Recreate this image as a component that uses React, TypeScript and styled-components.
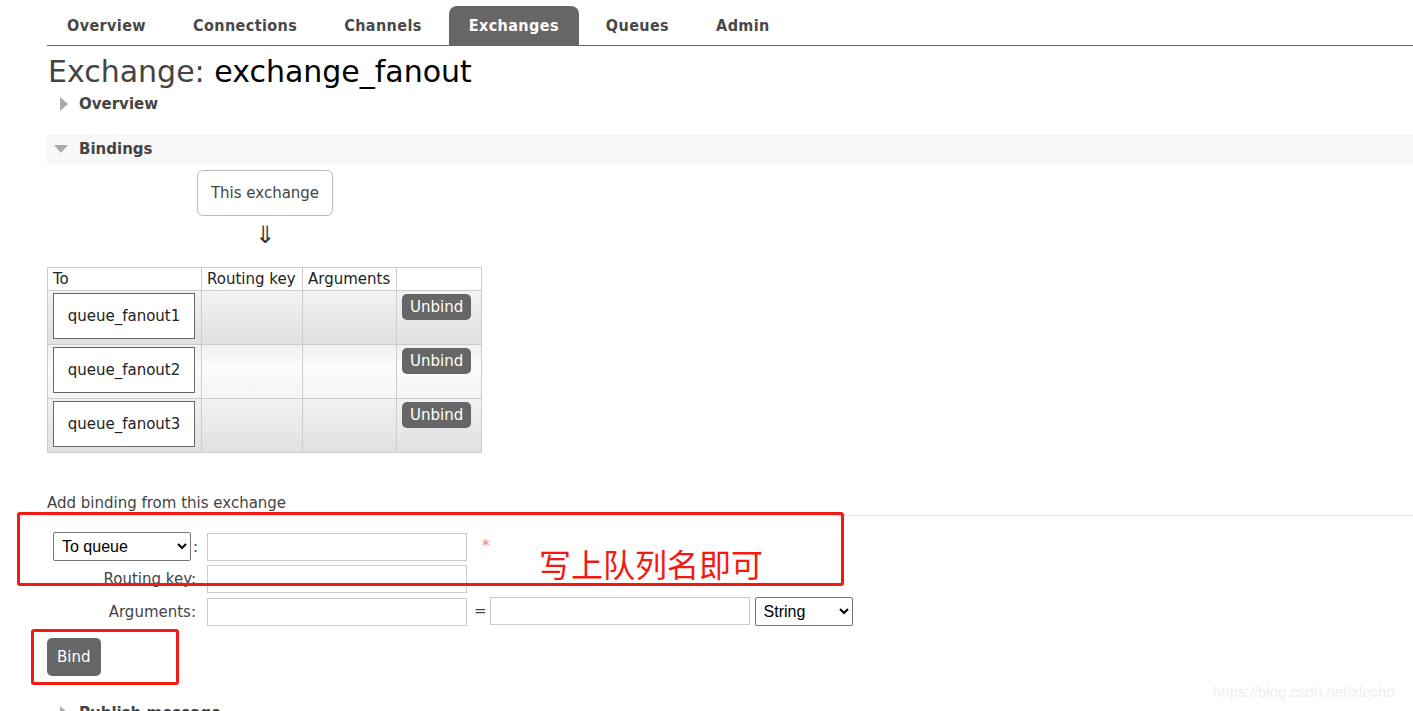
import styled, { createGlobalStyle } from 'styled-components';

const GlobalStyle = createGlobalStyle`
	body {
		margin: 0;
		background: #fff;
		font-family: 'DejaVu Sans', Verdana, sans-serif;
		color: #444;
	}
`;

const Page = styled.div`
	position: relative;
	width: 1413px;
	height: 711px;
	overflow: hidden;
`;

const Content = styled.div`
	padding-left: 47px;
`;

const Nav = styled.ul`
	display: flex;
	list-style: none;
	margin: 0;
	padding: 6px 0 0;
	height: 39px;
	border-bottom: 1px solid #666;
`;

const Tab = styled.li<{ $active?: boolean }>`
	display: flex;
	align-items: center;
	padding: 0 20px;
	margin-right: 7px;
	font-family: 'DejaVu Sans Condensed', 'DejaVu Sans', sans-serif;
	font-weight: bold;
	font-size: 16px;
	letter-spacing: 0.4px;
	color: ${(p) => (p.$active ? '#fff' : '#484848')};
	background: ${(p) => (p.$active ? '#666' : 'transparent')};
	border-radius: 8px 8px 0 0;
`;

const Title = styled.h1`
	margin: 9px 0 0 1px;
	font-size: 30px;
	font-weight: normal;
	line-height: 34px;
	color: #444;

	b {
		font-weight: normal;
		color: #000;
	}
`;

const SectionHead = styled.div<{ $open?: boolean }>`
	display: flex;
	align-items: center;
	height: 30px;
	padding-left: ${(p) => (p.$open ? '7px' : '13px')};
	background: ${(p) => (p.$open ? '#f8f8f8' : 'transparent')};
	font-weight: bold;
	font-size: 15px;
	color: #444;
`;

const Arrow = styled.span<{ $open?: boolean }>`
	display: inline-block;
	width: 0;
	height: 0;
	margin-right: 11px;
	${(p) =>
		p.$open
			? 'border-left: 7px solid transparent; border-right: 7px solid transparent; border-top: 8px solid #aaa;'
			: 'border-top: 7px solid transparent; border-bottom: 7px solid transparent; border-left: 8px solid #aaa;'}
`;

const Bindings = styled.div`
	margin-top: 15px;
`;

const Diagram = styled.div`
	padding-top: 6px;
`;

const ExchangeBox = styled.div`
	margin-left: 150px;
	width: 134px;
	height: 44px;
	border: 1px solid #bbb;
	border-radius: 6px;
	display: flex;
	align-items: center;
	justify-content: center;
	font-size: 15px;
	color: #444;
`;

const DownArrow = styled.div`
	width: 134px;
	margin-left: 151px;
	text-align: center;
	font-size: 24px;
	line-height: 38px;
	color: #333;
`;

const Table = styled.table`
	border-collapse: collapse;
	margin-top: 13px;
	font-size: 15px;
	color: #222;

	th,
	td {
		border: 1px solid #ccc;
		padding: 0;
	}

	th {
		height: 22px;
		font-weight: normal;
		text-align: left;
		padding: 0 5px;
	}
`;

const Row = styled.tr<{ $odd?: boolean }>`
	height: 54px;
	background: ${(p) =>
		p.$odd ? 'linear-gradient(#f2f2f2, #e0e0e0)' : 'linear-gradient(#f0f0f0, #fcfcfc 40%, #f4f4f4)'};

	td {
		vertical-align: top;
	}
`;

const QueueBox = styled.div`
	margin: 2px 5px 4px 5px;
	width: 140px;
	height: 44px;
	border: 1px solid #666;
	background: #fff;
	display: flex;
	align-items: center;
	justify-content: center;
	font-size: 15px;
	color: #222;
`;

const Button = styled.button<{ $tall?: boolean }>`
	border: none;
	background: #666;
	color: #fff;
	font-family: 'DejaVu Sans', Verdana, sans-serif;
	font-size: 15px;
	border-radius: 5px;
	padding: 0 ${(p) => (p.$tall ? '10px' : '8px')};
	height: ${(p) => (p.$tall ? '38px' : '26px')};
`;

const UnbindCell = styled.td`
	padding: 3px 10px 0 5px !important;
`;

const AddTitle = styled.div`
	margin-top: 41px;
	font-size: 15px;
	color: #444;
	padding-bottom: 3px;
	border-bottom: 1px solid #e8e8e8;
`;

const Form = styled.div`
	display: grid;
	grid-template-columns: 153px 260px auto;
	column-gap: 7px;
	row-gap: 4px;
	align-items: center;
	margin-top: 16px;
`;

const Label = styled.label`
	text-align: right;
	font-size: 15px;
	color: #444;
	padding-right: 4px;
`;

const SelectCell = styled.div`
	display: flex;
	align-items: center;
	padding-left: 6px;
	font-size: 15px;
`;

const Select = styled.select<{ $w: number }>`
	width: ${(p) => p.$w}px;
	height: 29px;
	font-family: 'Liberation Sans', Arial, sans-serif;
	font-size: 16px;
	color: #000;
	border: 1px solid #767676;
	border-radius: 2px;
	background: #fff;
	padding: 0 4px;
	margin-right: 2px;
`;

const Input = styled.input`
	box-sizing: border-box;
	width: 260px;
	height: 28px;
	border: 1px solid #ccc;
	margin: 0;
`;

const Extra = styled.div`
	display: flex;
	align-items: flex-start;
	gap: 3px;
	font-size: 15px;
	line-height: 28px;

	select {
		margin-left: 2px;
	}
`;

const Star = styled.span`
	color: #f77;
	margin-left: 8px;
	line-height: 15px;
	align-self: flex-start;
`;

const BindRow = styled.div`
	margin-top: 12px;
`;

const Publish = styled(SectionHead)`
	margin-top: 22px;
`;

const Mark = styled.div<{ $x: number; $y: number; $w: number; $h: number }>`
	position: absolute;
	left: ${(p) => p.$x}px;
	top: ${(p) => p.$y}px;
	width: ${(p) => p.$w}px;
	height: ${(p) => p.$h}px;
	border: 3px solid #f21a12;
	border-radius: 3px;
	box-sizing: border-box;
	pointer-events: none;
`;

const Note = styled.div`
	position: absolute;
	left: 539px;
	top: 543px;
	font-family: 'Noto Sans CJK SC', sans-serif;
	font-size: 32px;
	line-height: 40px;
	color: #f21a12;
`;

const Watermark = styled.div`
	position: absolute;
	left: 1213px;
	top: 683px;
	font-family: 'Liberation Sans', Arial, sans-serif;
	font-size: 15px;
	color: #eee;
`;

const tabs = ['Overview', 'Connections', 'Channels', 'Exchanges', 'Queues', 'Admin'];
const queues = ['queue_fanout1', 'queue_fanout2', 'queue_fanout3'];

const App = () => (
	<Page>
		<GlobalStyle />
		<Content>
			<Nav>
				{tabs.map((t) => (
					<Tab key={t} $active={t === 'Exchanges'}>
						{t}
					</Tab>
				))}
			</Nav>

			<Title>
				Exchange: <b>exchange_fanout</b>
			</Title>

			<SectionHead>
				<Arrow />
				Overview
			</SectionHead>

			<Bindings>
				<SectionHead $open>
					<Arrow $open />
					Bindings
				</SectionHead>
				<Diagram>
					<ExchangeBox>This exchange</ExchangeBox>
					<DownArrow>⇓</DownArrow>
				</Diagram>

				<Table>
					<thead>
						<tr>
							<th style={{ width: 143 }}>To</th>
							<th style={{ width: 90 }}>Routing key</th>
							<th style={{ width: 83 }}>Arguments</th>
							<th />
						</tr>
					</thead>
					<tbody>
						{queues.map((q, i) => (
							<Row key={q} $odd={i % 2 === 0}>
								<td>
									<QueueBox>{q}</QueueBox>
								</td>
								<td />
								<td />
								<UnbindCell>
									<Button>Unbind</Button>
								</UnbindCell>
							</Row>
						))}
					</tbody>
				</Table>
			</Bindings>

			<AddTitle>Add binding from this exchange</AddTitle>

			<Form>
				<SelectCell>
					<Select $w={138} defaultValue="queue">
						<option value="queue">To queue</option>
						<option value="exchange">To exchange</option>
					</Select>
					:
				</SelectCell>
				<Input />
				<Extra>
					<Star>*</Star>
				</Extra>

				<Label>Routing key:</Label>
				<Input />
				<div />

				<Label>Arguments:</Label>
				<Input />
				<Extra>
					=
					<Input />
					<Select $w={98} defaultValue="string">
						<option value="string">String</option>
						<option value="number">Number</option>
						<option value="boolean">Boolean</option>
					</Select>
				</Extra>
			</Form>

			<BindRow>
				<Button $tall>Bind</Button>
			</BindRow>

			<Publish>
				<Arrow />
				Publish message
			</Publish>
		</Content>

		<Mark $x={17} $y={512} $w={827} $h={74} />
		<Mark $x={31} $y={629} $w={148} $h={56} />
		<Note>写上队列名即可</Note>
		<Watermark>https://blog.csdn.net/xlecho</Watermark>
	</Page>
);

export default App;
